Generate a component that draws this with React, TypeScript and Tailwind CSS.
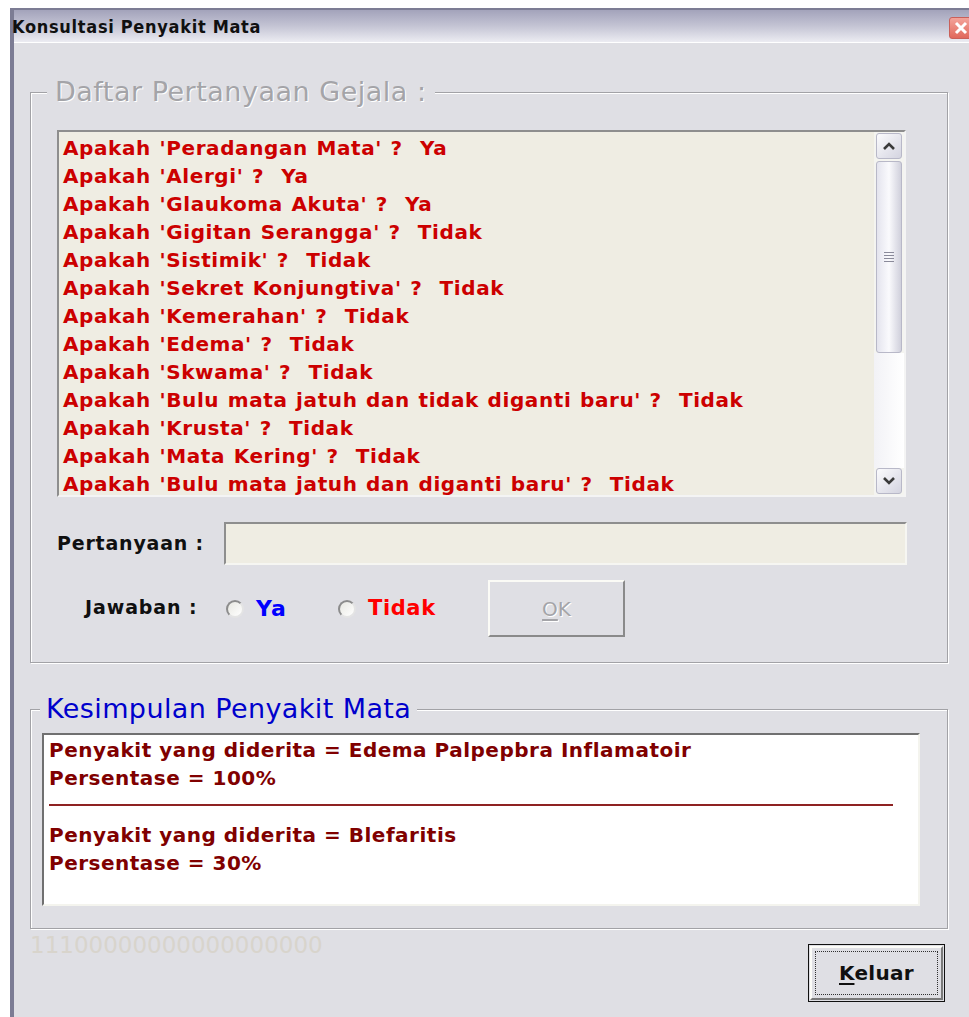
import React from "react";

const questions: [string, string][] = [
  ["Peradangan Mata", "Ya"],
  ["Alergi", "Ya"],
  ["Glaukoma Akuta", "Ya"],
  ["Gigitan Serangga", "Tidak"],
  ["Sistimik", "Tidak"],
  ["Sekret Konjungtiva", "Tidak"],
  ["Kemerahan", "Tidak"],
  ["Edema", "Tidak"],
  ["Skwama", "Tidak"],
  ["Bulu mata jatuh dan tidak diganti baru", "Tidak"],
  ["Krusta", "Tidak"],
  ["Mata Kering", "Tidak"],
  ["Bulu mata jatuh dan diganti baru", "Tidak"],
];

const dv = { fontFamily: '"DejaVu Sans", Verdana, sans-serif' };

function Chevron({ up }: { up?: boolean }) {
  return (
    <svg width="14" height="10" viewBox="0 0 14 10">
      <path
        d={up ? "M2 8 L7 3 L12 8" : "M2 2 L7 7 L12 2"}
        fill="none"
        stroke="#3a3a3a"
        strokeWidth="2.6"
      />
    </svg>
  );
}

function ScrollBtn({ up }: { up?: boolean }) {
  return (
    <div className="h-[26px] w-[26px] mx-auto rounded-[3px] border border-[#b8b8c8] bg-gradient-to-br from-[#fbfbfd] to-[#d4d4e0] flex items-center justify-center">
      <Chevron up={up} />
    </div>
  );
}

function Radio() {
  return (
    <span className="inline-block shrink-0 w-[18px] h-[18px] rounded-full border-2 border-t-[#8c8c8c] border-l-[#8c8c8c] border-r-[#e4e4e4] border-b-[#e4e4e4] bg-gradient-to-br from-[#e8e8e2] to-white" />
  );
}

export default function App() {
  return (
    <div className="w-[969px] h-[1017px] bg-white overflow-hidden pt-[8px] pl-[10px]" style={dv}>
      <div className="w-[975px] h-[1009px] border-l-[4px] border-t-[2px] border-[#7c7c94] bg-[#dfdfe4] flex flex-col">
        {/* title bar */}
        <div className="h-[33px] shrink-0 bg-gradient-to-b from-[#a3a3bb] via-[#c4c4d4] to-[#ececf2] flex items-center justify-between border-b border-white">
          <span
            className="-ml-[2px] text-[18px] font-bold text-[#101010] tracking-[0.7px]"
            style={{ fontFamily: '"DejaVu Sans Condensed", "DejaVu Sans", sans-serif', fontStretch: "condensed" }}
          >
            Konsultasi Penyakit Mata
          </span>
          <div className="w-[24px] h-[22px] mr-[12px] mt-[3px] rounded-[3px] bg-gradient-to-b from-[#f3a39a] to-[#e0685c] border border-[#c9605a] flex items-center pl-[4px]">
            <svg width="14" height="14" viewBox="0 0 14 14">
              <path d="M2 2 L12 12 M12 2 L2 12" stroke="white" strokeWidth="3" />
            </svg>
          </div>
        </div>

        {/* questions group */}
        <fieldset className="ml-[16px] mt-[34px] w-[918px] h-[586px] border border-[#a2a2a6] shadow-[inset_1px_1px_0_#ffffff,1px_1px_0_#ffffff] pl-[16px] pr-[0px]">
          <legend className="px-[8px] bg-[#dfdfe4] text-[27px] leading-[30px] tracking-[0.5px] text-[#a4a4a8] [text-shadow:1px_1px_0_#ffffff]">
            Daftar Pertanyaan Gejala :
          </legend>
          <div className="ml-[10px] mt-[23px] w-[849px] h-[367px] border-2 border-t-[#8e8e8e] border-l-[#8e8e8e] border-r-[#f4f4f4] border-b-[#f4f4f4] bg-[#efede3] flex">
            <div className="flex-1 pl-[4px] pt-[2px] overflow-hidden">
              {questions.map(([q, a]) => (
                <div
                  key={q}
                  className="text-[20px] leading-[28px] font-bold text-[#cc0000] whitespace-pre tracking-[0.6px] [word-spacing:1px]"
                >
                  {`Apakah '${q}' ?  ${a}`}
                </div>
              ))}
            </div>
            <div className="w-[30px] bg-[#f4f4f0] flex flex-col py-[1px]">
              <ScrollBtn up />
              <div className="mt-[2px] h-[192px] w-[26px] mx-auto rounded-[3px] border border-[#b8b8c8] bg-gradient-to-r from-[#e4e4ee] via-[#fafafd] to-[#d0d0dc] flex items-center justify-center">
                <div className="flex flex-col gap-[2px]">
                  <div className="w-[10px] h-[1px] bg-[#8a8a9a]" />
                  <div className="w-[10px] h-[1px] bg-[#8a8a9a]" />
                  <div className="w-[10px] h-[1px] bg-[#8a8a9a]" />
                  <div className="w-[10px] h-[1px] bg-[#8a8a9a]" />
                </div>
              </div>
              <div className="flex-1 bg-gradient-to-r from-[#f2f2f6] to-[#ffffff]" />
              <ScrollBtn />
            </div>
          </div>

          <div className="flex items-center mt-[25px] ml-[10px]">
            <span className="w-[167px] text-[19px] font-bold text-[#101010] tracking-[0.8px]">Pertanyaan :</span>
            <div className="w-[683px] h-[43px] border-2 border-t-[#8e8e8e] border-l-[#8e8e8e] border-r-[#f6f6f2] border-b-[#f6f6f2] bg-[#efede3]" />
          </div>

          <div className="flex items-center mt-[15px] ml-[38px] h-[57px]">
            <span className="w-[141px] text-[19px] font-bold text-[#101010] tracking-[0.9px] -mt-[2px]">Jawaban :</span>
            <Radio />
            <span className="ml-[12px] w-[82px] text-[22px] font-bold text-[#0000ff] tracking-[1px]">Ya</span>
            <Radio />
            <span className="ml-[12px] w-[120px] text-[21px] font-bold text-[#ff0000] tracking-[0.6px]">Tidak</span>
            <div className="w-[137px] h-[57px] border-2 border-t-[#fbfbf6] border-l-[#fbfbf6] border-r-[#8a8a8a] border-b-[#8a8a8a] flex items-center justify-center">
              <span className="text-[20px] text-[#a4a4a8] [text-shadow:1px_1px_0_#ffffff]">
                <span className="underline underline-offset-[3px]">O</span>K
              </span>
            </div>
          </div>
        </fieldset>

        {/* result group */}
        <fieldset className="ml-[16px] mt-[31px] w-[918px] h-[235px] border border-[#a2a2a6] shadow-[inset_1px_1px_0_#ffffff,1px_1px_0_#ffffff] pl-[9px]">
          <legend className="px-[6px] bg-[#dfdfe4] text-[27px] leading-[30px] tracking-[0.4px] text-[#0000cc]">Kesimpulan Penyakit Mata</legend>
          <div className="mt-[9px] ml-[2px] w-[878px] h-[173px] border-2 border-t-[#707070] border-l-[#707070] border-r-[#f4f4ee] border-b-[#f4f4ee] bg-white pl-[5px] pt-[1px]">
            <div className="text-[20px] leading-[28px] font-bold text-[#800000] tracking-[0.5px]">
              Penyakit yang diderita = Edema Palpepbra Inflamatoir
            </div>
            <div className="text-[20px] leading-[28px] font-bold text-[#800000] tracking-[0.5px]">Persentase = 100%</div>
            <div className="mt-[12px] mb-[15px] w-[844px] h-[2px] bg-[#8e2222]" />
            <div className="text-[20px] leading-[28px] font-bold text-[#800000] tracking-[0.5px]">
              Penyakit yang diderita = Blefaritis
            </div>
            <div className="text-[20px] leading-[28px] font-bold text-[#800000] tracking-[0.5px]">Persentase = 30%</div>
          </div>
        </fieldset>

        {/* footer */}
        <div className="ml-[16px] w-[918px] flex items-start justify-between">
          <span className="mt-[3px] text-[23px] leading-[26px] text-[#d8d4cc]">11100000000000000000</span>
          <div className="mt-[15px] mr-[3px] w-[137px] h-[58px] border border-[#101010] p-[1px]">
            <div className="w-full h-full border-2 border-t-[#fcfcf8] border-l-[#fcfcf8] border-r-[#7a7a7a] border-b-[#7a7a7a] p-[3px]">
              <div className="w-full h-full border border-dotted border-[#303030] flex items-center justify-center">
                <span className="text-[20px] font-bold text-[#101010] tracking-[0.3px]">
                  <span className="underline underline-offset-[3px]">K</span>eluar
                </span>
              </div>
            </div>
          </div>
        </div>
      </div>
    </div>
  );
}
